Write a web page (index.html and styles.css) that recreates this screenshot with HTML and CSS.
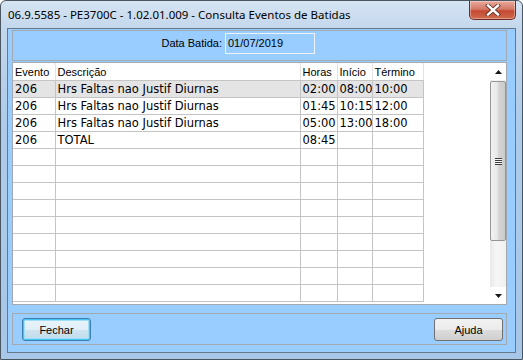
FILE: index.html
```html
<!DOCTYPE html>
<html lang="pt">
<head>
    <meta charset="UTF-8">
    <meta name="viewport" content="width=device-width, initial-scale=1.0">
    <title>Consulta Eventos de Batidas</title>
    <link rel="stylesheet" href="styles.css">
</head>
<body>
    <div class="window">
        <div class="titlebar">
            <span class="title">06.9.5585 - PE3700C - 1.02.01.009 - Consulta Eventos de Batidas</span>
            <button class="close-btn" title="Fechar">
                <svg width="16" height="12" viewBox="0 0 16 12">
                    <path d="M3 1.5 L13 10.5 M13 1.5 L3 10.5" stroke="#5a2a24" stroke-width="4" stroke-linecap="square"/>
                    <path d="M3 1.5 L13 10.5 M13 1.5 L3 10.5" stroke="#ffffff" stroke-width="2.4" stroke-linecap="square"/>
                </svg>
            </button>
        </div>
        <div class="client">
            <div class="filter-box">
                <span class="filter-label">Data Batida:</span>
                <span class="field">01/07/2019</span>
            </div>
            <div class="grid-box">
                <div class="grid-area">
                    <table class="grid">
                        <colgroup>
                            <col class="col-evento">
                            <col class="col-desc">
                            <col class="col-horas">
                            <col class="col-inicio">
                            <col class="col-termino">
                        </colgroup>
                        <thead>
                            <tr>
                                <th>Evento</th>
                                <th>Descrição</th>
                                <th>Horas</th>
                                <th>Início</th>
                                <th>Término</th>
                            </tr>
                        </thead>
                        <tbody>
                            <tr class="selected"><td>206</td><td>Hrs Faltas nao Justif Diurnas</td><td>02:00</td><td>08:00</td><td>10:00</td></tr>
                            <tr><td>206</td><td>Hrs Faltas nao Justif Diurnas</td><td>01:45</td><td>10:15</td><td>12:00</td></tr>
                            <tr><td>206</td><td>Hrs Faltas nao Justif Diurnas</td><td>05:00</td><td>13:00</td><td>18:00</td></tr>
                            <tr><td>206</td><td>TOTAL</td><td>08:45</td><td></td><td></td></tr>
                            <tr><td></td><td></td><td></td><td></td><td></td></tr>
                            <tr><td></td><td></td><td></td><td></td><td></td></tr>
                            <tr><td></td><td></td><td></td><td></td><td></td></tr>
                            <tr><td></td><td></td><td></td><td></td><td></td></tr>
                            <tr><td></td><td></td><td></td><td></td><td></td></tr>
                            <tr><td></td><td></td><td></td><td></td><td></td></tr>
                            <tr><td></td><td></td><td></td><td></td><td></td></tr>
                            <tr><td></td><td></td><td></td><td></td><td></td></tr>
                            <tr><td></td><td></td><td></td><td></td><td></td></tr>
                        </tbody>
                    </table>
                </div>
                <div class="scrollbar">
                    <div class="scroll-arrow">
                        <svg width="7" height="4" viewBox="0 0 7 4"><path d="M0 4 L3.5 0 L7 4 Z" fill="#1a1a1a"/></svg>
                    </div>
                    <div class="scroll-track">
                        <div class="scroll-thumb">
                            <span class="grip"></span>
                        </div>
                    </div>
                    <div class="scroll-arrow">
                        <svg width="7" height="4" viewBox="0 0 7 4"><path d="M0 0 L7 0 L3.5 4 Z" fill="#1a1a1a"/></svg>
                    </div>
                </div>
            </div>
            <div class="actions">
                <button class="btn btn-default">Fechar</button>
                <button class="btn">Ajuda</button>
            </div>
        </div>
    </div>
</body>
</html>
```

FILE: styles.css
```css
body {
    margin: 0;
    background-color: #ffffff;
    font-family: "Liberation Sans", Arial, sans-serif;
    font-size: 11px;
    color: #000;
}
.window {
    width: 523px;
    height: 360px;
    box-sizing: border-box;
    border: 1px solid #4b5663;
    border-radius: 6px 6px 0 0;
    padding: 0 6px 6px 6px;
    display: flex;
    flex-direction: column;
    background: linear-gradient(to bottom, #d6e4f3 0, #c3d7ec 28px, #aecbe9 120px, #a7c6e8 100%);
}
.titlebar {
    height: 27px;
    display: flex;
    align-items: center;
    padding-left: 1px;
}
.title {
    font-family: "Noto Sans", sans-serif;
    font-size: 11.5px;
    color: #000;
}
.close-btn {
    margin-left: auto;
    margin-right: 0;
    align-self: flex-start;
    width: 47px;
    height: 19px;
    border: 1px solid #6f2c24;
    border-top: none;
    border-radius: 0 0 5px 5px;
    padding: 0;
    display: flex;
    align-items: center;
    justify-content: center;
    background: linear-gradient(to bottom, #e9a99b 0, #d47a68 45%, #c54a33 55%, #cf6a4c 100%);
    box-shadow: inset 0 0 0 1px rgba(255, 255, 255, 0.35);
}
/* client area */
.client {
    flex: 1;
    border: 1px solid #66788c;
    background-color: #99ccff;
    padding: 1px 8px 7px 4px;
    display: flex;
    flex-direction: column;
    gap: 1px;
}
.filter-box {
    height: 31px;
    box-sizing: border-box;
    border: 1px solid #a2a9b1;
    display: flex;
    align-items: flex-start;
    padding-top: 2px;
}
.filter-label {
    width: 209px;
    text-align: right;
    margin-top: 4px;
}
.field {
    margin-left: 3px;
    width: 90px;
    height: 21px;
    box-sizing: border-box;
    border: 1px solid #eef3f9;
    padding: 3px 2px 0 2px;
}
/* grid */
.grid-box {
    height: 243px;
    box-sizing: border-box;
    border: 1px solid #a2a9b1;
    background-color: #ffffff;
    display: flex;
}
.grid-area {
    flex: 1;
    overflow: hidden;
}
.grid {
    border-collapse: collapse;
    table-layout: fixed;
    width: 410px;
}
.col-evento { width: 42px; }
.col-desc { width: 245px; }
.col-horas { width: 37px; }
.col-inicio { width: 35px; }
.col-termino { width: 51px; }
.grid th {
    height: 17px;
    padding: 0 0 0 2px;
    font-weight: normal;
    text-align: left;
    border-right: 1px solid #e3e3e3;
    border-bottom: 1px solid #c4c4c4;
    white-space: nowrap;
}
.grid td {
    height: 16px;
    padding: 0 0 0 2px;
    font-family: "DejaVu Sans", sans-serif;
    font-size: 11.5px;
    border-right: 1px solid #c4c4c4;
    border-bottom: 1px solid #c4c4c4;
    white-space: nowrap;
    overflow: hidden;
}
.grid tr.selected td {
    background-color: #e4e4e4;
}
.scrollbar {
    width: 16px;
    display: flex;
    flex-direction: column;
    background: linear-gradient(to right, #e8e8e8, #f6f6f6 40%, #f0f0f0);
}
.scroll-arrow {
    height: 17px;
    display: flex;
    align-items: center;
    justify-content: center;
    background-color: #ffffff;
}
.scroll-track {
    flex: 1;
    padding-top: 1px;
}
.scroll-thumb {
    height: 160px;
    box-sizing: border-box;
    border: 1px solid #959595;
    border-radius: 2px;
    background: linear-gradient(to right, #f2f2f2 0, #e8e8e8 45%, #d4d4d4 55%, #cbcbcb 100%);
    display: flex;
    align-items: center;
    justify-content: center;
}
.grip {
    width: 7px;
    height: 7px;
    background: repeating-linear-gradient(to bottom, #3f3f3f 0, #3f3f3f 1px, #f4f4f4 1px, #f4f4f4 2px);
}
/* bottom buttons */
.actions {
    margin-top: 7px;
    height: 32px;
    box-sizing: border-box;
    border: 1px solid #a2a9b1;
    display: flex;
    align-items: flex-start;
    justify-content: space-between;
    padding: 4px 3px 0 9px;
}
.btn {
    width: 69px;
    height: 23px;
    font-family: "Liberation Sans", Arial, sans-serif;
    font-size: 11px;
    color: #000;
    border: 1px solid #707070;
    border-radius: 3px;
    padding: 0;
    background: linear-gradient(to bottom, #f2f2f2 0, #ebebeb 50%, #dddddd 50%, #cfcfcf 100%);
}
.btn-default {
    border-color: #3c7fb1;
    box-shadow: inset 0 0 0 1px #48c4f2, inset 0 0 0 2px #9fe0f8;
    background: linear-gradient(to bottom, #eaf5fc 0, #e0eef7 50%, #cfe4f0 50%, #c1dcec 100%);
}
```
